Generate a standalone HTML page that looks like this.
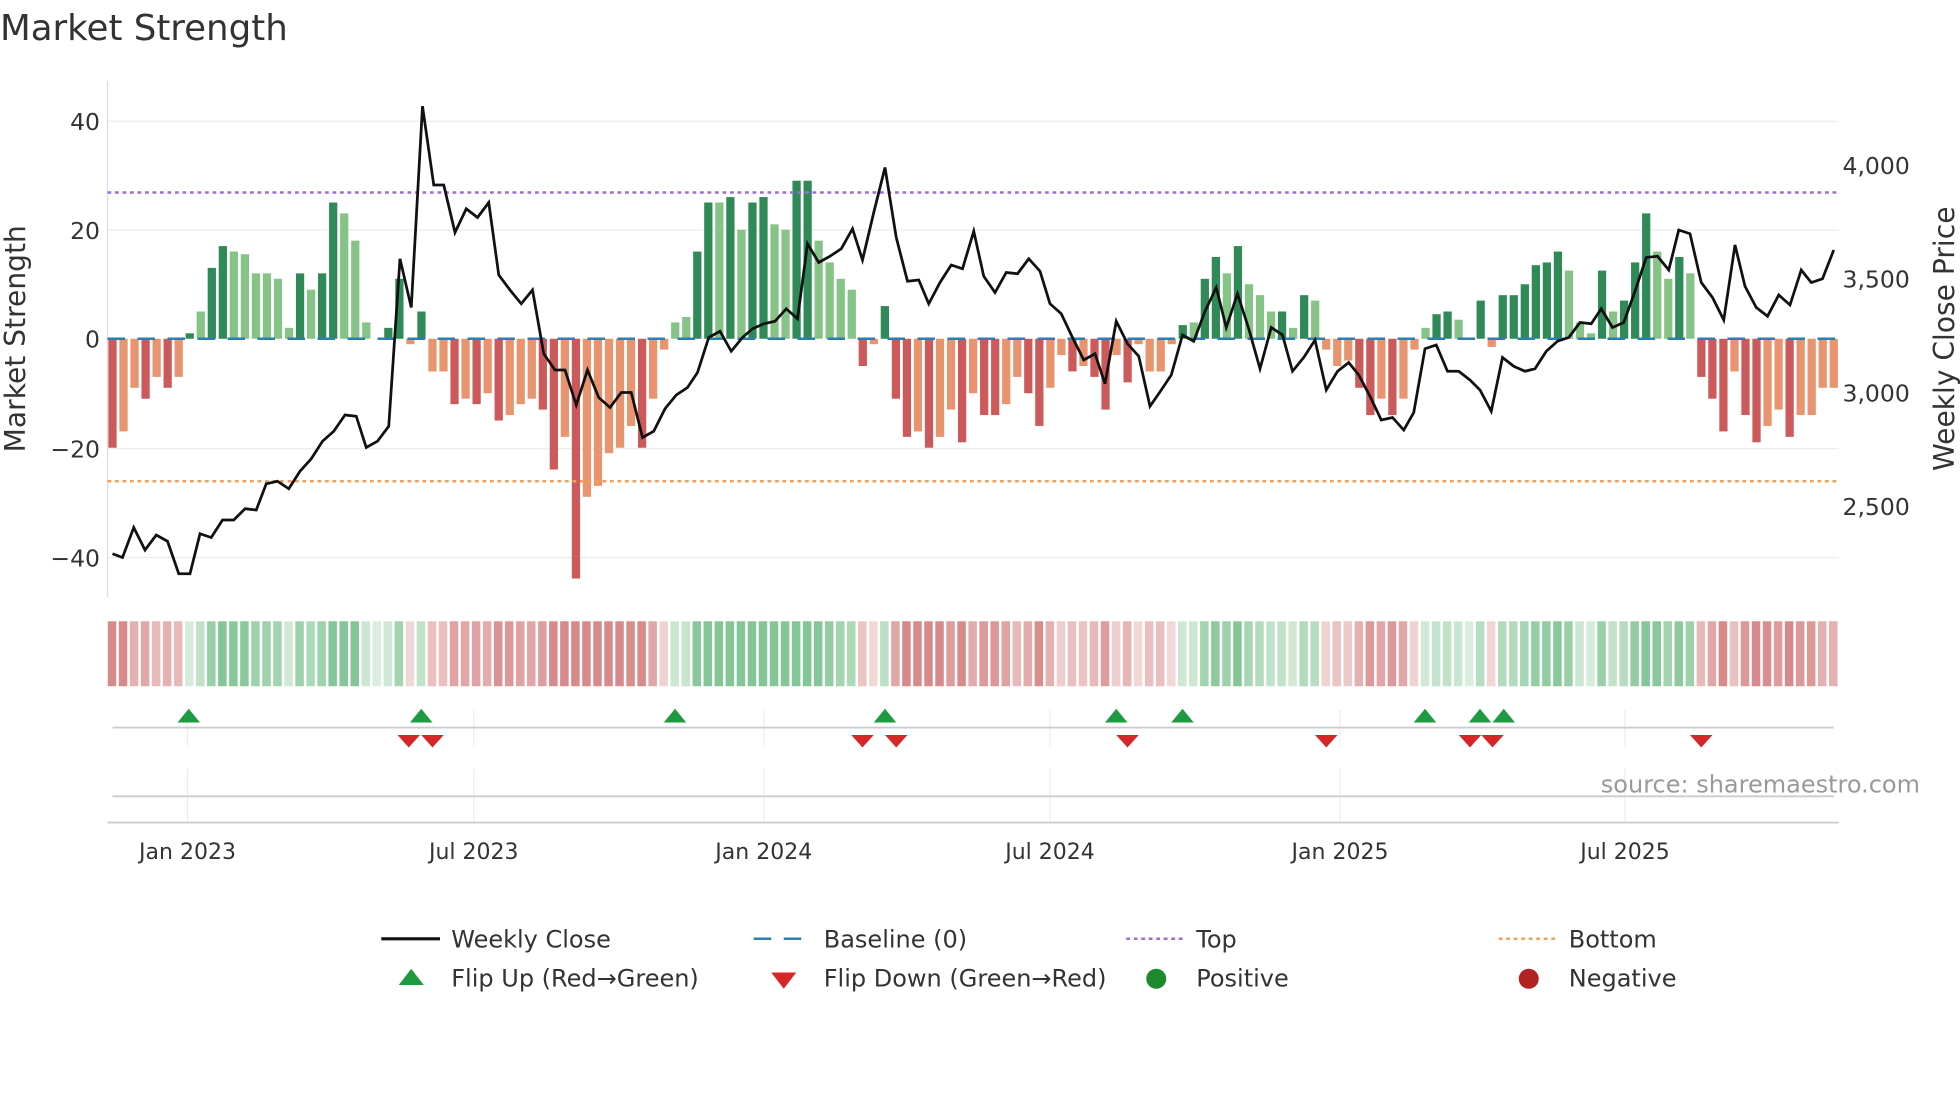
<!DOCTYPE html>
<html><head><meta charset="utf-8">
<style>
html,body{margin:0;padding:0;background:#fff;width:1960px;height:1102px;overflow:hidden}
svg{display:block}
text{font-family:"DejaVu Sans","Liberation Sans",sans-serif;fill:#333}
</style></head>
<body>
<svg id="s" width="1960" height="1102" viewBox="0 0 1568 881.6" xmlns="http://www.w3.org/2000/svg">
<text x="0" y="32" font-size="28.5" fill="#333">Market Strength</text>
<g stroke="#ececec" stroke-width="1">
<line x1="86" y1="97" x2="1471" y2="97"/><line x1="86" y1="184" x2="1471" y2="184"/>
<line x1="86" y1="359" x2="1471" y2="359"/><line x1="86" y1="446" x2="1471" y2="446"/>
</g>
<line x1="86" y1="65" x2="86" y2="478" stroke="#ddd"/>
<g font-size="18.8" text-anchor="end">
<text x="80" y="104">40</text><text x="80" y="191">20</text><text x="80" y="278">0</text>
<text x="80" y="366">−20</text><text x="80" y="453">−40</text>
</g>
<g font-size="18.8">
<text x="1474" y="139">4,000</text><text x="1474" y="230">3,500</text>
<text x="1474" y="321">3,000</text><text x="1474" y="412">2,500</text>
</g>
<text transform="translate(20,271) rotate(-90)" font-size="22.5" text-anchor="middle">Market Strength</text>
<text transform="translate(1563,271) rotate(-90)" font-size="22.5" text-anchor="middle">Weekly Close Price</text>
<g id="bars"></g>
<line x1="86" y1="154" x2="1471" y2="154" stroke="#9b6ddc" stroke-width="2" stroke-dasharray="3,3"/>
<line x1="86" y1="385" x2="1471" y2="385" stroke="#f0a05a" stroke-width="2" stroke-dasharray="3,3"/>
<line x1="86" y1="271" x2="1471" y2="271" stroke="#2a7fb0" stroke-width="2" stroke-dasharray="14,10"/>
<polyline id="price" fill="none" stroke="#111" stroke-width="2.2"/>
<g id="heat"></g>
<g stroke="#eee"><line x1="150" y1="568" x2="150" y2="598"/><line x1="379" y1="568" x2="379" y2="598"/><line x1="611" y1="568" x2="611" y2="598"/><line x1="840" y1="568" x2="840" y2="598"/><line x1="1072" y1="568" x2="1072" y2="598"/><line x1="1300" y1="568" x2="1300" y2="598"/>
<line x1="150" y1="615" x2="150" y2="658"/><line x1="379" y1="615" x2="379" y2="658"/><line x1="611" y1="615" x2="611" y2="658"/><line x1="840" y1="615" x2="840" y2="658"/><line x1="1072" y1="615" x2="1072" y2="658"/><line x1="1300" y1="615" x2="1300" y2="658"/></g>
<line x1="90" y1="582" x2="1467" y2="582" stroke="#ccc" stroke-width="1.5"/>
<line x1="90" y1="637" x2="1467" y2="637" stroke="#ccc" stroke-width="1.5"/>
<line x1="86" y1="658" x2="1471" y2="658" stroke="#ccc" stroke-width="1.5"/>
<g id="flips"></g>
<text x="1536" y="634" font-size="19.2" text-anchor="end" style="fill:#999">source: sharemaestro.com</text>
<g font-size="17.6" text-anchor="middle">
<text x="150" y="687">Jan 2023</text><text x="379" y="687">Jul 2023</text><text x="611" y="687">Jan 2024</text>
<text x="840" y="687">Jul 2024</text><text x="1072" y="687">Jan 2025</text><text x="1300" y="687">Jul 2025</text>
</g>
<g font-size="19.2">
<line x1="305" y1="751" x2="352" y2="751" stroke="#111" stroke-width="2.5"/><text x="361" y="758">Weekly Close</text>
<line x1="603" y1="751" x2="650" y2="751" stroke="#2a7fb0" stroke-width="2" stroke-dasharray="14,10"/><text x="659" y="758">Baseline (0)</text>
<line x1="901" y1="751" x2="948" y2="751" stroke="#9b6ddc" stroke-width="2" stroke-dasharray="3,3"/><text x="957" y="758">Top</text>
<line x1="1199" y1="751" x2="1246" y2="751" stroke="#f0a05a" stroke-width="2" stroke-dasharray="3,3"/><text x="1255" y="758">Bottom</text>
<polygon points="319,788 329,775 339,788" fill="#1e9a40"/><text x="361" y="789">Flip Up (Red→Green)</text>
<polygon points="617,778 627,791 637,778" fill="#d62728"/><text x="659" y="789">Flip Down (Green→Red)</text>
<circle cx="925" cy="783" r="8" fill="#1e8a2e"/><text x="957" y="789">Positive</text>
<circle cx="1223" cy="783" r="8" fill="#b22222"/><text x="1255" y="789">Negative</text>
</g>
</svg>
<script>
var v=[-20,-17,-9,-11,-7,-9,-7,1,5,13,17,16,15.5,12,12,11,2,12,9,12,25,23,18,3,0,2,11,-1,5,-6,-6,-12,-11,-12,-10,-15,-14,-12,-11,-13,-24,-18,-44,-29,-27,-21,-20,-16,-20,-11,-2,3,4,16,25,25,26,20,25,26,21,20,29,29,18,14,11,9,-5,-1,6,-11,-18,-17,-20,-18,-13,-19,-10,-14,-14,-12,-7,-10,-16,-9,-3,-6,-5,-7,-13,-3,-8,-1,-6,-6,-1,2.5,3,11,15,12,17,10,8,5,5,2,8,7,-2,-5,-4,-9,-14,-11,-14,-11,-2,2,4.5,5,3.5,0,7,-1.5,8,8,10,13.5,14,16,12.5,3,1,12.5,5,7,14,23,16,11,15,12,-7,-11,-17,-6,-14,-19,-16,-13,-18,-14,-14,-9,-9];
var dark={3:1,5:1,7:1,9:1,10:1,17:1,19:1,20:1,25:1,26:1,28:1,31:1,33:1,35:1,39:1,40:1,42:1,48:1,53:1,54:1,56:1,58:1,59:1,62:1,63:1,68:1,70:1,71:1,72:1,74:1,77:1,79:1,80:1,83:1,84:1,87:1,89:1,90:1,92:1,97:1,99:1,100:1,102:1,106:1,108:1,113:1,114:1,116:1,120:1,121:1,124:1,126:1,127:1,128:1,129:1,130:1,131:1,135:1,137:1,138:1,139:1,142:1,144:1,145:1,146:1,148:1,149:1,152:1,0:1};
var ns="http://www.w3.org/2000/svg",b=document.getElementById('bars'),h=document.getElementById('heat');
function el(t,a,p){var e=document.createElementNS(ns,t);for(var k in a)e.setAttribute(k,a[k]);p.appendChild(e);return e;}
for(var i=0;i<v.length;i++){var x=90+i*8.827,val=v[i],d=dark[i];
 var y0=271,y1=271-val*4.36;
 var c=val>=0?(d?'#2f8a58':'#86c386'):(d?'#cc5a5a':'#e8956f');
 if(Math.abs(val)>0.3)el('rect',{x:x-3.3,y:Math.min(y0,y1),width:6.6,height:Math.abs(y1-y0),fill:c},b);
 var a=Math.min(0.6,0.18+Math.abs(val)/40);
 el('rect',{x:x-3.8,y:497,width:6.8,height:52,fill:val>=0?'rgb(50,160,80)':'rgb(190,60,60)','fill-opacity':a},h);
}
var p=[90,443,98,446,107,422,116,440,125,428,134,433,143,459,152,459,160,427,169,430,178,416,187,416,196,407,205,408,213,387,222,385,231,391,240,377,249,367,258,353,267,345,276,332,285,333,293,358,302,353,311,341,320,207,329,246,338,85,347,148,355,148,364,186,373,167,382,174,391,162,399,220,408,232,417,243,426,232,435,283,444,296,452,296,461,324,470,296,479,318,488,326,497,314,505,314,514,350,523,345,532,327,541,316,550,310,558,298,567,270,576,265,585,281,594,270,602,263,611,259,620,257,629,247,638,255,646,195,655,210,664,205,673,199,682,183,690,208,699,170,708,134,717,190,726,225,735,224,743,243,752,226,761,212,770,215,779,185,787,221,796,234,805,218,814,219,823,207,832,217,840,243,849,251,858,270,867,288,876,283,884,307,893,257,902,275,911,285,920,325,929,312,937,300,946,268,955,273,964,249,973,230,981,262,990,235,999,263,1008,295,1017,262,1026,268,1034,297,1043,286,1052,272,1061,312,1070,297,1079,290,1087,300,1096,317,1105,336,1114,334,1123,344,1131,330,1140,279,1149,276,1158,297,1167,297,1176,304,1184,312,1193,329,1202,286,1211,293,1220,297,1228,295,1237,281,1246,273,1255,270,1264,258,1273,259,1281,247,1290,262,1299,258,1308,233,1317,206,1326,205,1335,216,1343,184,1352,187,1361,226,1370,238,1379,256,1388,196,1396,229,1405,246,1414,253,1423,236,1432,244,1441,216,1449,226,1458,223,1467,200];
var s='';for(var j=0;j<p.length;j+=2)s+=p[j]+','+p[j+1]+' ';
document.getElementById('price').setAttribute('points',s);
var f=document.getElementById('flips');
[151,337,540,708,893,946,1140,1184,1203].forEach(function(x){el('polygon',{points:(x-9)+',578 '+x+',567 '+(x+9)+',578',fill:'#1e9a40'},f);});
[327,346,690,717,902,1061,1176,1194,1361].forEach(function(x){el('polygon',{points:(x-9)+',588 '+x+',598 '+(x+9)+',588',fill:'#d62728'},f);});
</script>
</body></html>
